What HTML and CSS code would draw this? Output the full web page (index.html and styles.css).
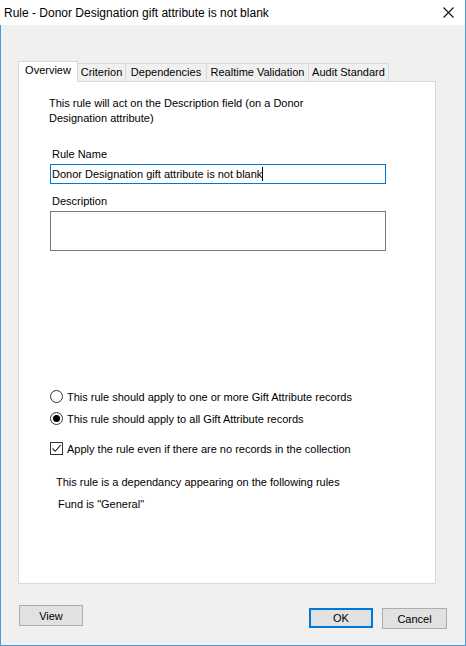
FILE: index.html
```html
<!DOCTYPE html>
<html lang="en">
<head>
  <meta charset="UTF-8">
  <title>Rule - Donor Designation gift attribute is not blank</title>
  <link rel="stylesheet" href="styles.css">
</head>
<body>

  <div class="dialog">

    <!-- Title bar -->
    <div class="titlebar">
      <span class="title">Rule - Donor Designation gift attribute is not blank</span>
      <svg class="close" width="11" height="11" viewBox="0 0 11 11">
        <path d="M0.5 0.5 L10.5 10.5 M10.5 0.5 L0.5 10.5" stroke="#111" stroke-width="1.1" fill="none"/>
      </svg>
    </div>

    <div class="client">

      <!-- Tabs -->
      <div class="tabs">
        <div class="tab active">Overview</div>
        <div class="tab tab-criterion">Criterion</div>
        <div class="tab tab-deps">Dependencies</div>
        <div class="tab tab-realtime">Realtime Validation</div>
        <div class="tab tab-audit">Audit Standard</div>
      </div>

      <!-- Overview page -->
      <div class="panel">
        <p class="intro">This rule will act on the Description field (on a Donor Designation attribute)</p>

        <div class="fields">
          <div class="field-label">Rule Name</div>
          <div class="textbox focused">Donor Designation gift attribute is not blank<span class="caret"></span></div>

          <div class="field-label desc-label">Description</div>
          <div class="textbox multi"></div>
        </div>

        <div class="options">
          <div class="option">
            <span class="radio"></span>
            <span>This rule should apply to one or more Gift Attribute records</span>
          </div>
          <div class="option">
            <span class="radio checked"></span>
            <span>This rule should apply to all Gift Attribute records</span>
          </div>
          <div class="option check-option">
            <span class="checkbox">
              <svg width="11" height="11" viewBox="0 0 11 11">
                <path d="M1.5 5.5 L4.2 8.3 L9.6 2.2" stroke="#222" stroke-width="1.1" fill="none"/>
              </svg>
            </span>
            <span>Apply the rule even if there are no records in the collection</span>
          </div>
        </div>

        <div class="deps">
          <div class="deps-title">This rule is a dependancy appearing on the following rules</div>
          <div class="deps-item">Fund is "General"</div>
        </div>
      </div>

      <!-- Buttons -->
      <div class="footer">
        <button class="btn btn-view">View</button>
        <div class="footer-right">
          <button class="btn btn-default">OK</button>
          <button class="btn">Cancel</button>
        </div>
      </div>

    </div>
  </div>

</body>
</html>
```

FILE: styles.css
```css
body {
  margin: 0;
  font-family: "Liberation Sans", Arial, sans-serif;
  font-size: 11px;
  color: #000;
  background: #f0f0f0;
}

.dialog {
  width: 466px;
  height: 646px;
  display: flex;
  flex-direction: column;
  box-sizing: border-box;
}

/* title bar */
.titlebar {
  height: 25px;
  flex: none;
  background: #fff;
  display: flex;
  align-items: center;
  padding: 0 11px 0 4px;
  border-right: 1px solid #4a9bd9;
}

.title {
  flex: 1;
  font-size: 12px;
  color: #000;
}

.close {
  margin-bottom: 1px;
}

.client {
  flex: 1;
  background: #f0f0f0;
  border: 1px solid #4a9bd9;
  border-top: none;
  display: flex;
  flex-direction: column;
}

/* tabs */
.tabs {
  display: flex;
  align-items: flex-end;
  padding: 36px 0 0 17px;
  height: 20px;
}

.tab {
  height: 18px;
  box-sizing: border-box;
  border: 1px solid #d9d9d9;
  border-bottom: none;
  border-left: none;
  background: #f0f0f0;
  text-align: center;
  line-height: 17px;
}

.tab.active {
  position: relative;
  z-index: 1;
  height: 21px;
  margin-bottom: -1px;
  width: 60px;
  background: #fff;
  border-left: 1px solid #d9d9d9;
  line-height: 16px;
  padding-bottom: 3px;
}

.tab-criterion { width: 48px; }
.tab-deps { width: 81px; }
.tab-realtime { width: 102px; }
.tab-audit { width: 80px; }

.panel {
  width: 418px;
  height: 503px;
  box-sizing: border-box;
  margin-left: 17px;
  background: #fff;
  border: 1px solid #d9d9d9;
  padding: 14px 0 0 30px;
}

.intro {
  margin: 0;
  width: 290px;
  line-height: 15px;
}

.fields {
  padding: 22px 0 0 1px;
}

.field-label {
  margin-left: 2px;
  height: 13px;
  line-height: 13px;
  margin-bottom: 3px;
}

.desc-label {
  margin-top: 11px;
  margin-bottom: 3px;
}

.textbox {
  width: 336px;
  height: 20px;
  box-sizing: border-box;
  border: 1px solid #7a7a7a;
  background: #fff;
  padding: 2px 1px;
  line-height: 14px;
  white-space: nowrap;
}

.textbox.focused {
  border-color: #0078d7;
}

.textbox.multi {
  height: 40px;
}

.caret {
  display: inline-block;
  width: 1px;
  height: 14px;
  background: #000;
  vertical-align: top;
}

/* radios and check */
.options {
  margin-top: 139px;
  padding-left: 1px;
}

.option {
  display: flex;
  align-items: center;
  gap: 4px;
  height: 13px;
  margin-bottom: 9px;
}

.check-option {
  margin-top: 17px;
}

.radio {
  width: 13px;
  height: 13px;
  box-sizing: border-box;
  border: 1px solid #333;
  border-radius: 50%;
  display: flex;
  align-items: center;
  justify-content: center;
  flex: none;
}

.radio.checked::after {
  content: "";
  width: 7px;
  height: 7px;
  border-radius: 50%;
  background: #000;
}

.checkbox {
  width: 13px;
  height: 13px;
  box-sizing: border-box;
  border: 1px solid #333;
  display: flex;
  align-items: center;
  justify-content: center;
  flex: none;
}

.deps {
  margin-top: 21px;
  padding-left: 7px;
}

.deps-title {
  line-height: 13px;
  margin-bottom: 9px;
}

.deps-item {
  padding-left: 2px;
  line-height: 13px;
}

/* footer */
.footer {
  display: flex;
  justify-content: space-between;
  align-items: flex-start;
  padding: 21px 18px 0 18px;
}

.footer-right {
  display: flex;
  gap: 9px;
  margin-top: 3px;
}

.btn {
  width: 65px;
  height: 21px;
  box-sizing: border-box;
  background: #e1e1e1;
  border: 1px solid #adadad;
  font-family: "Liberation Sans", Arial, sans-serif;
  font-size: 11px;
  color: #000;
  padding: 0;
}

.btn-view {
  width: 64px;
}

.btn-default {
  width: 64px;
  height: 20px;
  border: 2px solid #0078d7;
}
```
